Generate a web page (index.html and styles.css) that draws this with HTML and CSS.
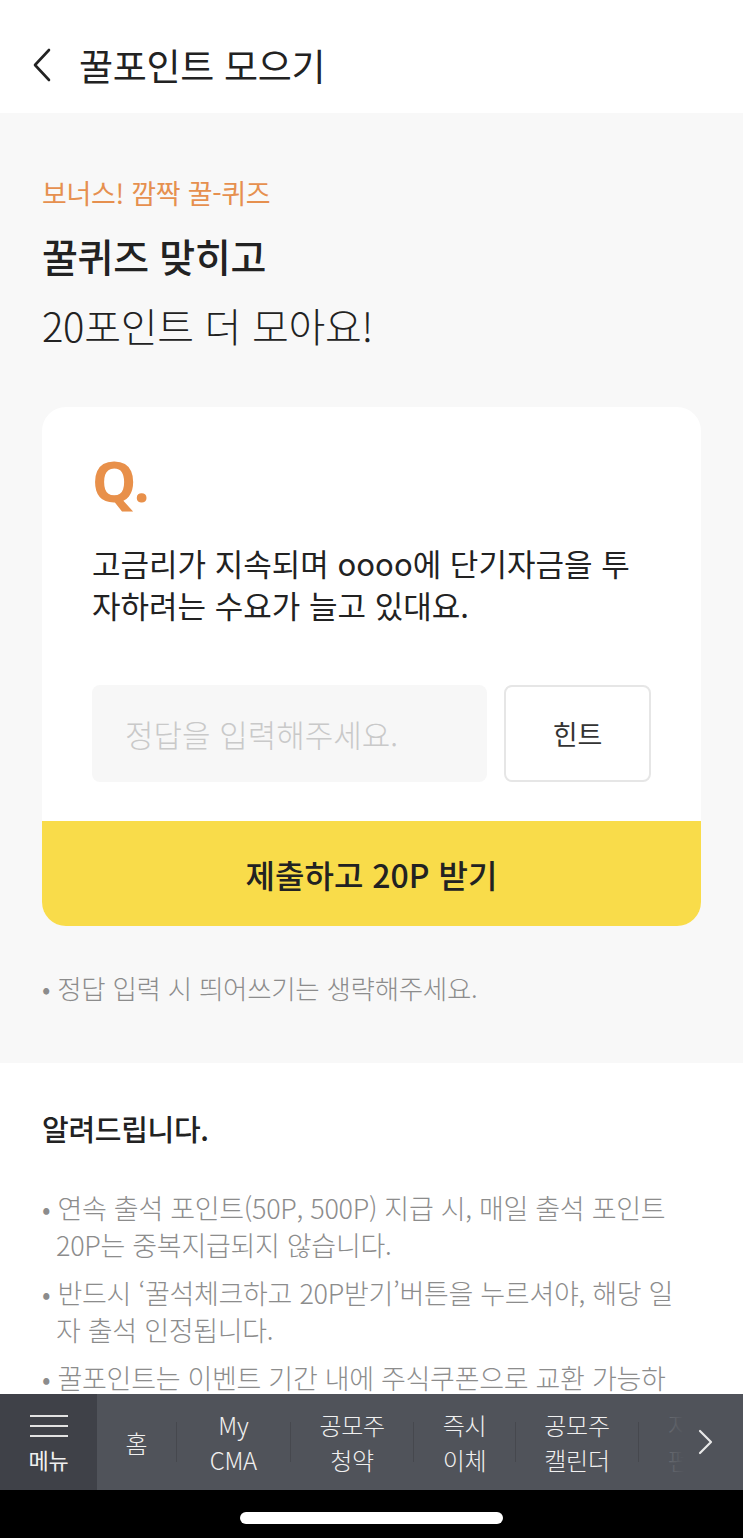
FILE: index.html
```html
<!DOCTYPE html>
<html lang="ko">
<head>
  <meta charset="UTF-8">
  <meta name="viewport" content="width=device-width, initial-scale=1.0">
  <title>꿀포인트 모으기</title>
  <link rel="stylesheet" href="styles.css">
</head>
<body>
  <header class="top-bar">
    <button class="back-btn" aria-label="뒤로">
      <svg width="22" height="34" viewBox="0 0 22 34"><path d="M18 2 L4 17 L18 32" fill="none" stroke="#222" stroke-width="2.6" stroke-linecap="round" stroke-linejoin="round"/></svg>
    </button>
    <h1>꿀포인트 모으기</h1>
  </header>

  <section class="quiz-area">
    <p class="eyebrow">보너스! 깜짝 꿀-퀴즈</p>
    <h2 class="headline"><strong>꿀퀴즈 맞히고</strong><br>20포인트 더 모아요!</h2>

    <div class="quiz-card">
      <div class="quiz-body">
        <div class="q-mark">Q.</div>
        <p class="question">고금리가 지속되며 oooo에 단기자금을 투자하려는 수요가 늘고 있대요.</p>
        <div class="answer-row">
          <input type="text" class="answer" placeholder="정답을 입력해주세요." autocomplete="off">
          <button class="hint-btn">힌트</button>
        </div>
      </div>
      <button class="submit-btn">제출하고 20P 받기</button>
    </div>

    <p class="note">• 정답 입력 시 띄어쓰기는 생략해주세요.</p>
  </section>

  <section class="notice">
    <h3>알려드립니다.</h3>
    <ul class="notice-list">
      <li>• 연속 출석 포인트(50P, 500P) 지급 시, 매일 출석 포인트 20P는 중복지급되지 않습니다.</li>
      <li>• 반드시 ‘꿀석체크하고 20P받기’버튼을 누르셔야, 해당 일자 출석 인정됩니다.</li>
      <li>• 꿀포인트는 이벤트 기간 내에 주식쿠폰으로 교환 가능하며, 기간 종료 후 소멸됩니다.</li>
    </ul>
  </section>

  <nav class="tab-bar">
    <div class="menu-cell">
      <span class="burger"><i></i><i></i><i></i></span>
      <span>메뉴</span>
    </div>
    <div class="tabs">
      <a class="tab">홈</a>
      <i class="sep"></i>
      <a class="tab tab-wide">My<br>CMA</a>
      <i class="sep"></i>
      <a class="tab">공모주<br>청약</a>
      <i class="sep"></i>
      <a class="tab">즉시<br>이체</a>
      <i class="sep"></i>
      <a class="tab">공모주<br>캘린더</a>
      <i class="sep"></i>
      <a class="tab">지수<br>펀드</a>
    </div>
    <div class="tab-more">
      <svg width="18" height="28" viewBox="0 0 18 28"><path d="M3 3 L14 14 L3 25" fill="none" stroke="#e8e8e8" stroke-width="2.2" stroke-linecap="round" stroke-linejoin="round"/></svg>
    </div>
  </nav>
  <div class="home-bar"><span></span></div>
</body>
</html>
```

FILE: styles.css
```css
body {
  font-family: "Noto Sans CJK KR", "Noto Sans", sans-serif;
  margin: 0;
  color: #222;
  background: #fff;
  letter-spacing: -0.3px;
}
p, h1, h2, h3, ul { margin: 0; padding: 0; }

.top-bar {
  height: 113px;
  box-sizing: border-box;
  padding: 16px 0 0 31px;
  display: flex; align-items: center; gap: 26px;
  background: #fff;
}
.back-btn {
  border: none; background: none; padding: 0; cursor: pointer;
  display: flex;
}
.top-bar h1 { font-size: 37px; font-weight: 400; line-height: 50px; }

.quiz-area {
  background: #f8f8f8;
  padding: 62px 42px 57px;
}
.eyebrow {
  color: #e6904f;
  font-size: 27px; line-height: 36px;
}
.headline {
  margin-top: 9px;
  font-size: 40px; line-height: 70px; font-weight: 300;
}
.headline strong { font-weight: 500; font-size: 39px; }

.quiz-card {
  margin-top: 47px;
  background: #fff;
  border-radius: 24px;
  overflow: hidden;
}
.quiz-body { padding: 43px 50px 39px; }
.q-mark {
  font-family: "Noto Sans", sans-serif;
  font-size: 56px; font-weight: 700; line-height: 60px;
  color: #e8904a;
}
.question {
  margin-top: 32px;
  font-size: 31px; line-height: 42px; font-weight: 400;
  letter-spacing: 0;
}
.answer-row {
  margin-top: 59px;
  display: flex; gap: 17px;
  height: 97px;
}
.answer {
  flex: 1; min-width: 0;
  border: none; border-radius: 8px;
  background: #f7f7f7;
  padding: 0 0 0 33px;
  font: inherit; font-size: 31px; font-weight: 300; color: #222;
}
.answer::placeholder { color: #c9c9c9; }
.hint-btn {
  width: 147px;
  border: 2px solid #e6e6e6; border-radius: 8px;
  background: #fff;
  font: inherit; font-size: 27px; color: #333;
  cursor: pointer;
}
.submit-btn {
  display: block; width: 100%;
  height: 105px;
  border: none;
  background: #f9dc4a;
  font: inherit; font-size: 32px; font-weight: 500; color: #222;
  cursor: pointer;
}
.note {
  margin-top: 44px;
  font-size: 26.5px; line-height: 36px; font-weight: 300;
  color: #8c8c8c;
}

.notice { padding: 45px 42px 40px; }
.notice h3 { font-size: 29px; line-height: 40px; font-weight: 500; }
.notice-list {
  list-style: none;
  margin-top: 41px;
  padding-right: 20px;
  display: flex; flex-direction: column; gap: 11px;
}
.notice-list li {
  font-size: 27px; line-height: 37px; font-weight: 300;
  color: #8c8c8c;
  padding-left: 14px; text-indent: -14px;
}

.tab-bar {
  position: fixed; left: 0; right: 0; bottom: 48px;
  height: 96px;
  display: flex;
  background: #50535a;
  color: #f0f0f0;
  overflow: hidden;
}
.menu-cell {
  width: 97px; flex: none;
  background: #3f4148;
  display: flex; flex-direction: column; align-items: center; justify-content: center;
  gap: 9px;
  font-size: 22px; line-height: 26px;
}
.burger { display: flex; flex-direction: column; gap: 8px; padding-top: 2px; }
.burger i { display: block; width: 38px; height: 2px; background: #e2e2e2; }
.tabs {
  display: flex; align-items: center;
  flex: none;
}
.tab {
  padding: 0 28.5px;
  text-align: center;
  font-size: 24px; line-height: 35px; font-weight: 300;
  white-space: nowrap;
}
.tab-wide { padding: 0 33px; }
.sep { display: block; width: 1px; height: 40px; background: #46484e; }
.tab-more {
  position: absolute; right: 0; top: 0; bottom: 0;
  width: 90px;
  display: flex; align-items: center; justify-content: flex-end;
  padding-right: 28px; box-sizing: border-box;
  background: linear-gradient(to right, rgba(80, 83, 90, 0.7) 0%, #50535a 35%);
}

.home-bar {
  position: fixed; left: 0; right: 0; bottom: 0;
  height: 48px;
  background: #000;
  display: flex; justify-content: center; align-items: center;
}
.home-bar span {
  width: 263px; height: 12px; border-radius: 6px;
  background: #fff;
  margin-top: 7px;
}
```
